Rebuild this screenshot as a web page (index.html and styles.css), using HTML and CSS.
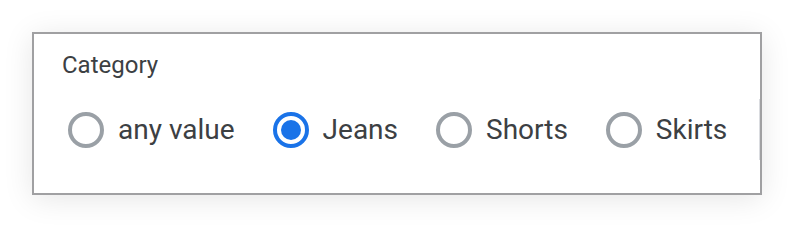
FILE: index.html
```html
<!DOCTYPE html>
<html lang="en">
<head>
    <meta charset="UTF-8">
    <title>Category filter</title>
    <link rel="stylesheet" href="styles.css">
</head>
<body>
    <div class="page">
        <fieldset class="filter-box">
            <div class="filter-label">Category</div>
            <div class="radio-row">
                <label class="radio-item">
                    <span class="radio"></span>
                    <span class="radio-text">any value</span>
                </label>
                <label class="radio-item">
                    <span class="radio checked"></span>
                    <span class="radio-text">Jeans</span>
                </label>
                <label class="radio-item">
                    <span class="radio"></span>
                    <span class="radio-text">Shorts</span>
                </label>
                <label class="radio-item">
                    <span class="radio"></span>
                    <span class="radio-text">Skirts</span>
                </label>
            </div>
        </fieldset>
    </div>
</body>
</html>
```

FILE: styles.css
```css
body {
    margin: 0;
    background-color: #ffffff;
    font-family: Roboto, "Liberation Sans", Arial, sans-serif;
    color: #3c4043;
}
.page {
    padding: 32px;
}
.filter-box {
    margin: 0;
    min-width: 0;
    width: 730px;
    height: 163px;
    box-sizing: border-box;
    border: 2px solid #a0a0a2;
    padding: 17px 0 0 28px;
    background-color: #ffffff;
    box-shadow: 0 4px 28px rgba(0, 0, 0, 0.10);
}
.filter-label {
    font-size: 24px;
    line-height: 28px;
}
.radio-row {
    display: flex;
    align-items: center;
    gap: 38px;
    height: 61px;
    margin-top: 20px;
    padding-left: 6px;
    border-right: 1px solid #dadce0;
}
.radio-item {
    display: flex;
    align-items: center;
    flex-shrink: 0;
    font-size: 28px;
    white-space: nowrap;
}
.radio {
    width: 36px;
    height: 36px;
    box-sizing: border-box;
    border: 4px solid #9aa0a6;
    border-radius: 50%;
    margin-right: 14px;
    display: flex;
    align-items: center;
    justify-content: center;
}
.radio.checked {
    border-color: #1a73e8;
}
.radio.checked::after {
    content: "";
    width: 20px;
    height: 20px;
    border-radius: 50%;
    background-color: #1a73e8;
}
```
